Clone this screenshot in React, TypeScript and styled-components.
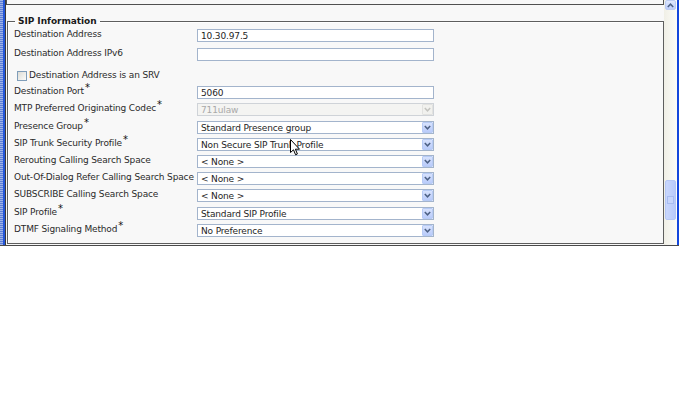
import React from "react";
import styled, { createGlobalStyle } from "styled-components";

const Global = createGlobalStyle`
  html, body { margin: 0; padding: 0; background: #ffffff; }
  body { font-family: "DejaVu Sans", Verdana, sans-serif; }
  #root { width: 679px; height: 400px; background: #ffffff; }
`;

const Window = styled.div`
  width: 679px;
  height: 246px;
  display: flex;
  background: #f8f8f8;
  border-bottom: 1px solid #4a4a4a;
  box-sizing: border-box;
  position: relative;
`;

const LeftEdge = styled.div`
  width: 6px;
  flex: none;
  background:
    repeating-linear-gradient(to bottom, #9fb3e6 0 1px, #5d7ed8 1px 2px) 0 0 / 3px 100% no-repeat,
    linear-gradient(to right, transparent 0 3px, #2456d8 3px 5px, #3a3a3a 5px 6px);
`;

const Main = styled.div`
  flex: 1;
  min-width: 0;
  display: flex;
  flex-direction: column;
`;

const TopPanel = styled.div`
  height: 5px;
  flex: none;
  border: 1px solid #505050;
  border-top: none;
  box-sizing: border-box;
  background: #f8f8f8;
`;

const Fieldset = styled.fieldset`
  margin: 10px 0 0 1px;
  padding: 0 0 0 6px;
  border: 1px solid #5e5e5e;
  box-shadow: inset 1px 1px 0 #ffffff;
  height: 229px;
  box-sizing: border-box;
  min-width: 0;
`;

const Legend = styled.legend`
  margin-left: 1px;
  padding: 0 3px;
  font: bold 9px/13px "DejaVu Sans", Verdana, sans-serif;
  letter-spacing: -0.05px;
  color: #1a1a1a;
`;

const Rows = styled.div`
  display: flex;
  flex-direction: column;
  padding-top: 1px;
`;

const Row = styled.div<{ $h?: number }>`
  display: grid;
  grid-template-columns: 183px 237px;
  align-items: start;
  height: ${(p) => p.$h ?? 17.33}px;
`;

const Label = styled.div`
  font-size: 9px;
  letter-spacing: -0.15px;
  line-height: 11px;
  color: #2a2a2a;
  white-space: nowrap;
`;

const Req = styled.sup`
  font-size: 10px;
  line-height: 0;
  vertical-align: 3px;
  margin-left: 1px;
  color: #111;
`;

const Box = styled.div<{ $disabled?: boolean }>`
  position: relative;
  height: 13px;
  box-sizing: border-box;
  border: 1px solid ${(p) => (p.$disabled ? "#cfd3d8" : "#a3b4cc")};
  background: ${(p) => (p.$disabled ? "#f4f4f2" : "#ffffff")};
  color: ${(p) => (p.$disabled ? "#a9a9a9" : "#1e1e1e")};
  font-size: 9px;
  letter-spacing: -0.15px;
  line-height: 12px;
  padding-left: 3px;
  white-space: nowrap;
  overflow: hidden;
`;

const ArrowBtn = styled.div<{ $disabled?: boolean }>`
  position: absolute;
  right: 0;
  top: 0;
  width: 11px;
  height: 11px;
  box-sizing: border-box;
  border: 1px solid ${(p) => (p.$disabled ? "#e2e2e0" : "#b7cbf5")};
  border-radius: 1px;
  background: ${(p) =>
    p.$disabled
      ? "#f1f1ee"
      : "linear-gradient(to bottom, #d7e2fd, #b9cbfa)"};
  display: flex;
  align-items: center;
  justify-content: center;
`;

const CheckRow = styled.div`
  height: 20.5px;
  display: flex;
  align-items: center;
  gap: 2px;
  padding-left: 3px;
  padding-top: 1px;
  box-sizing: border-box;
`;

const CheckBox = styled.span`
  width: 10px;
  height: 10px;
  box-sizing: border-box;
  border: 1px solid #7f9db9;
  background: linear-gradient(135deg, #dcdcd6, #fbfbf9);
  display: inline-block;
`;

const Scrollbar = styled.div`
  width: 13px;
  flex: none;
  background: linear-gradient(to right, #f0efe6, #fcfcf8);
  position: relative;
  display: flex;
  flex-direction: column;
  align-items: center;
`;

const ScrollBtn = styled.div`
  width: 11px;
  height: 10px;
  box-sizing: border-box;
  border: 1px solid #bcccf3;
  border-radius: 2px;
  background: linear-gradient(to bottom, #dfe8fe, #bccdfa);
  display: flex;
  align-items: center;
  justify-content: center;
`;

const Thumb = styled.div`
  width: 11px;
  height: 40px;
  margin-top: 170px;
  box-sizing: border-box;
  border: 1px solid #b5c7f6;
  border-radius: 2px;
  background: linear-gradient(to right, #c9d7fd, #b8cafb);
  display: flex;
  align-items: center;
  justify-content: center;
`;

const Grip = styled.div`
  width: 5px;
  height: 6px;
  border: 1px solid #a8bcf0;
  background: #c6d5fc;
`;

const RightEdge = styled.div`
  width: 2px;
  flex: none;
  background: #1447dc;
`;

const Cursor = styled.svg`
  position: absolute;
  left: 290px;
  top: 139px;
`;

const Chevron = ({ up, disabled }: { up?: boolean; disabled?: boolean }) => (
  <svg width="7" height="5" viewBox="0 0 7 5">
    <path
      d={up ? "M0.8 4 L3.5 1.2 L6.2 4" : "M0.8 1 L3.5 3.8 L6.2 1"}
      fill="none"
      stroke={disabled ? "#c4c4c0" : "#4d6185"}
      strokeWidth="1.5"
    />
  </svg>
);

type Field = {
  label: string;
  req?: boolean;
  value: string;
  select?: boolean;
  disabled?: boolean;
  h?: number;
};

const before: Field[] = [
  { label: "Destination Address", value: "10.30.97.5", h: 19 },
  { label: "Destination Address IPv6", value: "", h: 17 },
];

const after: Field[] = [
  { label: "Destination Port", req: true, value: "5060", h: 17.5 },
  { label: "MTP Preferred Originating Codec", req: true, value: "711ulaw", select: true, disabled: true, h: 17.5 },
  { label: "Presence Group", req: true, value: "Standard Presence group", select: true, h: 17 },
  { label: "SIP Trunk Security Profile", req: true, value: "Non Secure SIP Trunk Profile", select: true, h: 17 },
  { label: "Rerouting Calling Search Space", value: "< None >", select: true, h: 17 },
  { label: "Out-Of-Dialog Refer Calling Search Space", value: "< None >", select: true, h: 17.5 },
  { label: "SUBSCRIBE Calling Search Space", value: "< None >", select: true, h: 17.5 },
  { label: "SIP Profile", req: true, value: "Standard SIP Profile", select: true, h: 17 },
  { label: "DTMF Signaling Method", req: true, value: "No Preference", select: true, h: 17 },
];

const FieldRow = ({ f }: { f: Field }) => (
  <Row $h={f.h}>
    <Label>
      {f.label}
      {f.req && <Req>*</Req>}
    </Label>
    <Box $disabled={f.disabled}>
      {f.value}
      {f.select && (
        <ArrowBtn $disabled={f.disabled}>
          <Chevron disabled={f.disabled} />
        </ArrowBtn>
      )}
    </Box>
  </Row>
);

export default function App() {
  return (
    <>
      <Global />
      <Window>
        <LeftEdge />
        <Main>
          <TopPanel />
          <Fieldset>
            <Legend>SIP Information</Legend>
            <Rows>
              {before.map((f) => (
                <FieldRow key={f.label} f={f} />
              ))}
              <CheckRow>
                <CheckBox />
                <Label>Destination Address is an SRV</Label>
              </CheckRow>
              {after.map((f) => (
                <FieldRow key={f.label} f={f} />
              ))}
            </Rows>
          </Fieldset>
        </Main>
        <Scrollbar>
          <ScrollBtn>
            <Chevron up />
          </ScrollBtn>
          <Thumb>
            <Grip />
          </Thumb>
        </Scrollbar>
        <RightEdge />
        <Cursor width="11" height="17" viewBox="0 0 11 17">
          <path
            d="M0.5 0.5 L0.5 13.5 L3.5 10.8 L5.6 15.8 L7.4 15 L5.4 10.2 L9.5 10.2 Z"
            fill="#ffffff"
            stroke="#000000"
            strokeWidth="1"
            strokeLinejoin="round"
          />
        </Cursor>
      </Window>
    </>
  );
}
